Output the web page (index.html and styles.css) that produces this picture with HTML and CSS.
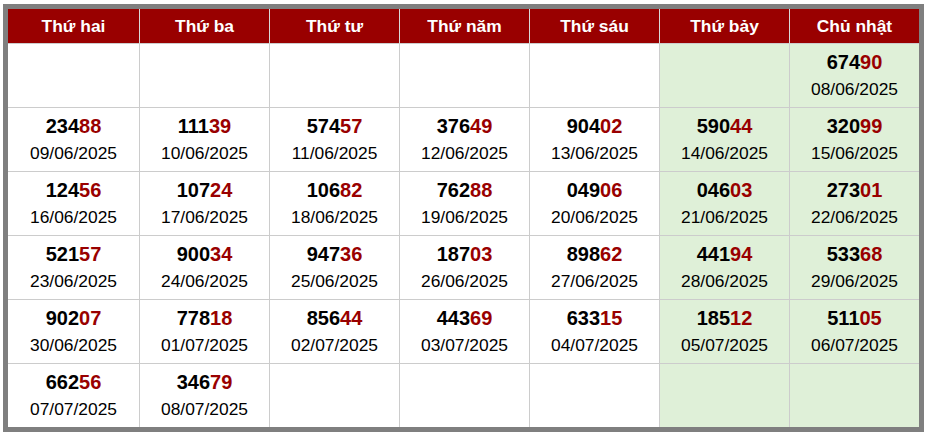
FILE: index.html
```html
<!DOCTYPE html>
<html lang="vi">
<head>
<meta charset="utf-8">
<title>Lịch kết quả</title>
<link rel="stylesheet" href="styles.css">
</head>
<body>
<div class="frame">
  <div class="head">
    <div class="th">Thứ hai</div>
    <div class="th">Thứ ba</div>
    <div class="th">Thứ tư</div>
    <div class="th">Thứ năm</div>
    <div class="th">Thứ sáu</div>
    <div class="th">Thứ bảy</div>
    <div class="th">Chủ nhật</div>
  </div>
  <div class="body">
    <div class="td"></div>
    <div class="td"></div>
    <div class="td"></div>
    <div class="td"></div>
    <div class="td"></div>
    <div class="td wk"></div>
    <div class="td wk"><span class="num">674<b>90</b></span><span class="date">08/06/2025</span></div>

    <div class="td"><span class="num">234<b>88</b></span><span class="date">09/06/2025</span></div>
    <div class="td"><span class="num">111<b>39</b></span><span class="date">10/06/2025</span></div>
    <div class="td"><span class="num">574<b>57</b></span><span class="date">11/06/2025</span></div>
    <div class="td"><span class="num">376<b>49</b></span><span class="date">12/06/2025</span></div>
    <div class="td"><span class="num">904<b>02</b></span><span class="date">13/06/2025</span></div>
    <div class="td wk"><span class="num">590<b>44</b></span><span class="date">14/06/2025</span></div>
    <div class="td wk"><span class="num">320<b>99</b></span><span class="date">15/06/2025</span></div>

    <div class="td"><span class="num">124<b>56</b></span><span class="date">16/06/2025</span></div>
    <div class="td"><span class="num">107<b>24</b></span><span class="date">17/06/2025</span></div>
    <div class="td"><span class="num">106<b>82</b></span><span class="date">18/06/2025</span></div>
    <div class="td"><span class="num">762<b>88</b></span><span class="date">19/06/2025</span></div>
    <div class="td"><span class="num">049<b>06</b></span><span class="date">20/06/2025</span></div>
    <div class="td wk"><span class="num">046<b>03</b></span><span class="date">21/06/2025</span></div>
    <div class="td wk"><span class="num">273<b>01</b></span><span class="date">22/06/2025</span></div>

    <div class="td"><span class="num">521<b>57</b></span><span class="date">23/06/2025</span></div>
    <div class="td"><span class="num">900<b>34</b></span><span class="date">24/06/2025</span></div>
    <div class="td"><span class="num">947<b>36</b></span><span class="date">25/06/2025</span></div>
    <div class="td"><span class="num">187<b>03</b></span><span class="date">26/06/2025</span></div>
    <div class="td"><span class="num">898<b>62</b></span><span class="date">27/06/2025</span></div>
    <div class="td wk"><span class="num">441<b>94</b></span><span class="date">28/06/2025</span></div>
    <div class="td wk"><span class="num">533<b>68</b></span><span class="date">29/06/2025</span></div>

    <div class="td"><span class="num">902<b>07</b></span><span class="date">30/06/2025</span></div>
    <div class="td"><span class="num">778<b>18</b></span><span class="date">01/07/2025</span></div>
    <div class="td"><span class="num">856<b>44</b></span><span class="date">02/07/2025</span></div>
    <div class="td"><span class="num">443<b>69</b></span><span class="date">03/07/2025</span></div>
    <div class="td"><span class="num">633<b>15</b></span><span class="date">04/07/2025</span></div>
    <div class="td wk"><span class="num">185<b>12</b></span><span class="date">05/07/2025</span></div>
    <div class="td wk"><span class="num">511<b>05</b></span><span class="date">06/07/2025</span></div>

    <div class="td"><span class="num">662<b>56</b></span><span class="date">07/07/2025</span></div>
    <div class="td"><span class="num">346<b>79</b></span><span class="date">08/07/2025</span></div>
    <div class="td"></div>
    <div class="td"></div>
    <div class="td"></div>
    <div class="td wk"></div>
    <div class="td wk"></div>
  </div>
</div>
</body>
</html>
```

FILE: styles.css
```css
html, body {
  margin: 0;
  padding: 0;
  background: #fff;
}
body {
  font-family: "Liberation Sans", Arial, sans-serif;
  color: #000;
}
.frame {
  width: 911px;
  margin: 4px 0 0 3px;
  border: 5px solid #7f7f7f;
  background: #cccccc;
}
.head {
  display: grid;
  grid-template-columns: 131px repeat(6, 129px);
  column-gap: 1px;
  background: #d9d9d9;
  border-bottom: 1px solid #cccccc;
}
.th {
  background: #990000;
  color: #fff;
  font-weight: bold;
  font-size: 17.4px;
  height: 34px;
  line-height: 34px;
  text-align: center;
}
.body {
  display: grid;
  grid-template-columns: 131px repeat(6, 129px);
  grid-auto-rows: 63px;
  gap: 1px;
}
.td {
  background: #fff;
  display: flex;
  flex-direction: column;
  justify-content: center;
  align-items: center;
}
.td.wk {
  background: #dff0d8;
}
.num {
  font-size: 20px;
  font-weight: bold;
  line-height: 27px;
}
.num b {
  color: #990000;
}
.date {
  font-size: 17.4px;
  line-height: 27px;
}
```
